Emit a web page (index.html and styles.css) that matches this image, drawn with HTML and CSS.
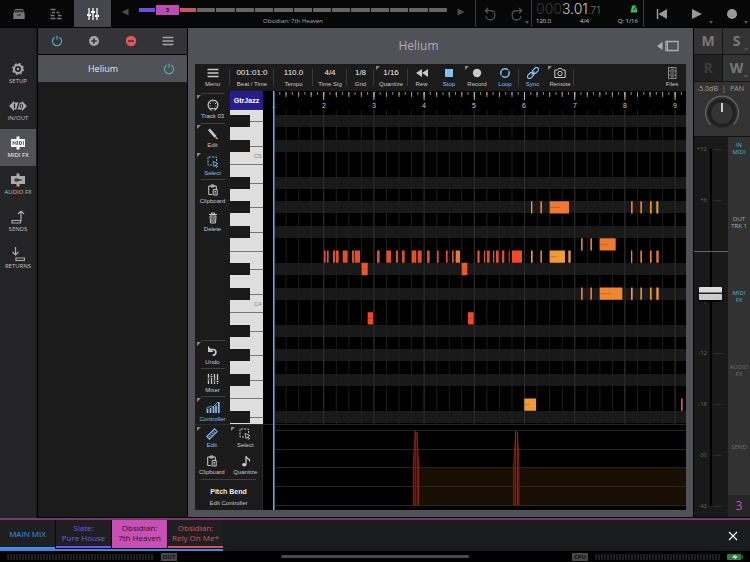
FILE: index.html
```html
<!DOCTYPE html>
<html lang="en">
<head>
<meta charset="utf-8">
<meta name="viewport" content="width=device-width, initial-scale=1">
<title>Helium</title>
<link rel="stylesheet" href="styles.css">
</head>
<body>
<svg class="defs" width="0" height="0" aria-hidden="true">
  <symbol id="power" viewBox="0 0 12 12"><path d="M3.7 2.2a4.6 4.6 0 1 0 4.6 0M6 .8v4" fill="none" stroke="currentColor" stroke-width="1.1"/></symbol>
  <symbol id="bars" viewBox="0 0 12 12"><path d="M.5 2.5h11M.5 6h11M.5 9.500h11" stroke="currentColor" stroke-width="1.300"/></symbol>
  <symbol id="clipboard" viewBox="0 0 12 12"><g fill="none" stroke="currentColor"><path d="M5 10.500H1.700v-8.500H9.300V5M4 3V1h3v2z"/><path d="M6.200 5.500h4v5.500h-4zM7.500 7.500h1.500M7.500 9h1.500"/></g></symbol>
  <symbol id="marquee" viewBox="0 0 12 12"><path d="M9.500 5V1H1v8h4" fill="none" stroke="currentColor" stroke-dasharray="2 1.200"/><path d="M6 5.500l5 2-2 .8 1.500 2.500-1 .5L8.200 9 7 10.500z" fill="none" stroke="currentColor" stroke-width=".8"/></symbol>
  <symbol id="sliders" viewBox="0 0 12 12"><path d="M2 0v12M6 0v12M10 0v12" stroke="currentColor" stroke-width="1.300"/><path d="M0 7h4M4 4h4M8 8h4" stroke="currentColor" stroke-width="2"/></symbol>
</svg>

<header class="topbar">
  <nav class="views">
    <button class="view" aria-label="Library"><svg class="i12" viewBox="0 0 12 12"><path d="M1 5l1.500-3.500h7L11 5z" fill="none" stroke="currentColor"/><path d="M3 3h6M2.500 4.300h7" stroke="currentColor" stroke-width=".7"/><path d="M.3 5h11.400v6H.3z" fill="currentColor"/><path d="M4 7h4" stroke="#222"/></svg></button>
    <button class="view" aria-label="Sequencer"><svg class="i12" viewBox="0 0 12 12"><path d="M.5 1.500h5M2 4.500h3M6.500 4.500h3M.5 7.500h4M8 7.500h3.500M.5 10.500h5M7 10.500h4.500" stroke="currentColor" stroke-width="1.500"/></svg></button>
    <button class="view active" aria-label="Mixer"><svg class="i12" viewBox="0 0 12 12"><use href="#sliders"/></svg></button>
  </nav>
  <div class="selector">
    <button class="arrow" aria-label="Previous track"><svg class="i8" viewBox="0 0 8 8"><path d="M7.500.5v7L.5 4z" fill="currentColor"/></svg></button>
    <div class="overview">
      <div class="segments">
        <i class="seg violet"></i><b class="seg current">3</b><i class="seg red"></i>
        <i class="seg"></i><i class="seg"></i><i class="seg"></i><i class="seg"></i><i class="seg"></i><i class="seg"></i><i class="seg"></i><i class="seg"></i><i class="seg"></i><i class="seg"></i><i class="seg"></i><i class="seg"></i><i class="seg"></i>
      </div>
      <span class="track-name">Obsidian: 7th Heaven</span>
    </div>
    <button class="arrow" aria-label="Next track"><svg class="i8" viewBox="0 0 8 8"><path d="M.5.5v7L7.500 4z" fill="currentColor"/></svg></button>
  </div>
  <div class="history">
    <button aria-label="Undo"><svg class="i14" viewBox="0 0 14 14"><path d="M2.500 3.700H8a4.600 4.600 0 1 1-5.200 5.500M5 1L2.300 3.700 5 6.200" fill="none" stroke="currentColor" stroke-width="1.200"/></svg></button>
    <button class="more" aria-label="Redo"><svg class="i14" viewBox="0 0 14 14"><path d="M11.500 3.700H6a4.600 4.600 0 1 0 5.200 5.500M9 1l2.700 2.700L9 6.200" fill="none" stroke="currentColor" stroke-width="1.200"/></svg></button>
  </div>
  <div class="clock">
    <div class="clock-main"><span class="time"><span class="dim">000</span>3.01<small>.71</small></span>
      <svg class="i8" viewBox="0 0 8 8"><path d="M2 .5h4l1.500 7h-7z" fill="#35bd66"/><path d="M3.500 5L7.500 0" stroke="#0a2513"/></svg></div>
    <div class="clock-sub"><span>120.0</span><span>4/4</span><span>Q: 1/16</span></div>
  </div>
  <div class="transport">
    <button aria-label="Return to start"><svg class="i12" viewBox="0 0 12 12"><path d="M1.500 1v10" stroke="currentColor" stroke-width="1.500"/><path d="M11 1v10L2.500 6z" fill="currentColor"/></svg></button>
    <button class="more" aria-label="Play"><svg class="i12" viewBox="0 0 12 12"><path d="M1 1l10 5-10 5z" fill="currentColor"/></svg></button>
    <button class="more" aria-label="Record"><svg class="i12" viewBox="0 0 12 12"><circle cx="6" cy="6" r="5" fill="currentColor"/></svg></button>
  </div>
</header>

<main class="workspace">
  <nav class="sections">
    <button><svg class="i14" viewBox="0 0 14 14"><circle cx="7" cy="7" r="4" fill="none" stroke="currentColor" stroke-width="2"/><circle cx="7" cy="7" r="5.400" fill="none" stroke="currentColor" stroke-width="1.200" stroke-dasharray="2.200 2.040"/><circle cx="7" cy="7" r="1.200" fill="currentColor"/></svg>SETUP</button>
    <button><svg class="wide" viewBox="0 0 18 14"><path d="M0 7l5-5v1.500h8V2l5 5-5 5v-1.500H5V12z" fill="currentColor"/><path d="M5.500 4.700v4.600M10.300 3L7.700 11" stroke="#242427" stroke-width="1.200"/><ellipse cx="12.300" cy="7" rx="1.400" ry="1.900" fill="none" stroke="#242427"/></svg>IN/OUT</button>
    <button class="active"><svg class="i14" viewBox="0 0 14 14"><path d="M0 3h5.500V.5h3V3H14v8H8.500v2.500h-3V11H0z" fill="currentColor"/><path d="M2 9V5.500l1.500 2 1.500-2V9M6.700 5v4M8.500 5.500V8.500H10q1-1.500 0-3zM12.300 5v4" fill="none" stroke="#45454c" stroke-width=".9"/></svg>MIDI FX</button>
    <button><svg class="i14" viewBox="0 0 14 14"><path d="M0 3h5.500V.5h3V3H14v8H8.500v2.500h-3V11H0z" fill="currentColor"/><path d="M3 7h8M5 5v4M6.500 5.500v3M8 6v2" stroke="#242427"/></svg>AUDIO FX</button>
    <button><svg class="i14" viewBox="0 0 14 14"><path d="M1 10.500h8.500V13H1zM10 11V1M7 4l3-3 3 3" fill="none" stroke="currentColor" stroke-width="1.200"/></svg>SENDS</button>
    <button><svg class="i14" viewBox="0 0 14 14"><path d="M5 11h8.500v2.500H5zM4.500 0v8M1.500 5l3 3 3-3" fill="none" stroke="currentColor" stroke-width="1.200"/></svg>RETURNS</button>
  </nav>

  <section class="chain">
    <div class="chain-tools">
      <button class="cyan" aria-label="Power"><svg class="i12" viewBox="0 0 12 12"><use href="#power"/></svg></button>
      <button aria-label="Add"><svg class="i12" viewBox="0 0 12 12"><circle cx="6" cy="6" r="5" fill="currentColor"/><path d="M6 3.300v5.400M3.300 6h5.400" stroke="#343438" stroke-width="1.500"/></svg></button>
      <button class="remove" aria-label="Remove"><svg class="i12" viewBox="0 0 12 12"><circle cx="6" cy="6" r="5.200" fill="currentColor"/><path d="M3 6h6" stroke="#343438" stroke-width="1.500"/></svg></button>
      <button aria-label="List"><svg class="i12" viewBox="0 0 12 12"><use href="#bars"/></svg></button>
    </div>
    <div class="chain-item"><span class="chain-name">Helium</span><button class="cyan" aria-label="Helium power"><svg class="i12" viewBox="0 0 12 12"><use href="#power"/></svg></button></div>
  </section>

  <section class="plugin">
    <div class="plugin-title"><span></span><h1>Helium</h1>
      <button aria-label="Expand"><svg class="expand" viewBox="0 0 22 12"><path d="M0 6l5.500-4v8z" fill="currentColor"/><path d="M9 1.500h12v9H9z" fill="none" stroke="currentColor" stroke-width="1.300"/><path d="M10.500 1v10" stroke="currentColor"/></svg></button></div>
    <div class="daw">
      <div class="daw-bar">
        <button class="w35 sep"><svg class="i12" viewBox="0 0 12 12"><use href="#bars"/></svg>Menu</button>
        <button class="w44 sep"><b>001:01:0</b>Beat / Time</button>
        <button class="w39 sep"><b>110.0</b>Tempo</button>
        <button class="w34 sep"><b>4/4</b>Time Sig</button>
        <button class="w27 sep"><b>1/8</b>Grid</button>
        <button class="w34 sep corner"><b>1/16</b>Quantize</button>
        <button class="w27"><svg class="i12" viewBox="0 0 12 12"><path d="M6 2v8L0 6zM12 2v8L6 6z" fill="currentColor"/></svg>Rew</button>
        <button class="w28 on"><svg class="i12" viewBox="0 0 12 12"><path d="M2 2h8v8H2z" fill="currentColor"/></svg>Stop</button>
        <button class="w28 corner"><svg class="i12" viewBox="0 0 12 12"><circle cx="6" cy="6" r="4.200" fill="currentColor"/></svg>Record</button>
        <button class="w28 on sep"><svg class="i12" viewBox="0 0 12 12"><circle cx="6" cy="6" r="4.200" fill="none" stroke="currentColor" stroke-width="1.500"/><path d="M9.500 1.500v2.700H7M2.500 10.500V7.800H5" fill="none" stroke="#1b1b1b" stroke-width=".8"/></svg>Loop</button>
        <button class="w27 on"><svg class="i12" viewBox="0 0 12 12"><g fill="none" stroke="currentColor" stroke-width="1.200"><rect x="5" y="1.500" width="7" height="4" rx="2" transform="rotate(-45 8.500 3.500)"/><rect x="0" y="6.500" width="7" height="4" rx="2" transform="rotate(-45 3.500 8.500)"/><path d="M4.500 7.500l3-3"/></g></svg>Sync</button>
        <button class="w28 sep corner"><svg class="i12" viewBox="0 0 12 12"><path d="M.8 3h2.700l1-1.500h3l1 1.500h2.700v7.500H.8z" fill="none" stroke="currentColor"/><circle cx="6" cy="6.500" r="2.200" fill="none" stroke="currentColor"/></svg>Remote</button>
        <button class="w28 last"><svg class="i12 grey" viewBox="0 0 12 12"><path d="M2.500.5h7.500v11H2.500zM2.500 4H10M2.500 8H10M4.500 2.200h3.500M4.500 6h3.500M4.500 9.800h3.500" fill="none" stroke="currentColor"/></svg>Files</button>
      </div>
      <div class="daw-body">
        <div class="tools">
          <button class="rule corner"><svg class="i12" viewBox="0 0 12 12"><circle cx="6" cy="6" r="4.900" fill="none" stroke="currentColor" stroke-width="1.200"/><path d="M4 11.500V9.500h4v2" fill="#1b1b1b" stroke="currentColor"/><path d="M3 4.500h1M8 4.500h1M5.500 3h1M2.700 7h1M8.300 7h1" stroke="currentColor"/></svg>Track 03</button>
          <button class="rule corner"><svg class="i12" viewBox="0 0 12 12"><path d="M3 .5l6.500 7.500-2 1.800L1 2.300z" fill="currentColor"/><path d="M9.500 8.800l1.800 2.500L8 10.300z" fill="currentColor"/></svg>Edit</button>
          <button class="on corner"><svg class="i12" viewBox="0 0 12 12"><use href="#marquee"/></svg>Select</button>
          <button class="rule"><svg class="i12" viewBox="0 0 12 12"><use href="#clipboard"/></svg>Clipboard</button>
          <button><svg class="i12" viewBox="0 0 12 12"><path d="M2 2.500h8M4.500 2V1h3v1" fill="none" stroke="currentColor"/><path d="M3 4h6l-.5 7h-5zM5 5v5M7 5v5" fill="none" stroke="currentColor"/></svg>Delete</button>
          <span class="spacer"></span>
          <button class="rule corner"><svg class="i12" viewBox="0 0 12 12"><path d="M3.500 4.500h3a2.700 2.700 0 1 1-.8 5.500" fill="none" stroke="currentColor" stroke-width="1.700"/><path d="M1 1v6h5.500z" fill="currentColor"/></svg>Undo</button>
          <button class="rule"><svg class="i12" viewBox="0 0 12 12"><path d="M1.500 1v10M4.500 1v10M7.500 1v10M10.500 1v10" stroke="currentColor" stroke-width="1.300"/><path d="M0 6h3M3 3.500h3M6 8h3M9 8.500h3" stroke="#1b1b1b" stroke-width="2.500"/><path d="M.5 6h2M3.500 3.500h2M6.500 8h2M9.500 8.500h2" stroke="currentColor"/></svg>Mixer</button>
          <button class="rule on corner"><svg class="i14" viewBox="0 0 14 12"><path d="M1.500 8v4M4.500 7v5M7.500 6v6M10 4.500V12M12.800 1v11" stroke="currentColor" stroke-width="1.700"/><path d="M0 7.500l4-2 3 .5 5-5" fill="none" stroke="currentColor" stroke-width=".8"/></svg>Controller</button>
        </div>
        <div class="keyboard">
          <b>GtrJazz</b>
          <svg class="fill" aria-label="Keys">
            <rect width="100%" height="314" fill="#dedede"/>
            <path d="M19 11.500h14M19 36.500h14M0 54.500h33M19 73.500h14M19 97.500h14M19 122.500h14M0 141.500h33M19 159.500h14M19 184.500h14M0 202.500h33M19 221.500h14M19 245.500h14M19 270.500h14M0 288.500h33M19 307.500h14" stroke="#777"/>
            <path d="M0 5h20v12H0zM0 30h20v12H0zM0 67h20v12H0zM0 91h20v12H0zM0 116h20v12H0zM0 153h20v12H0zM0 178h20v12H0zM0 215h20v12H0zM0 239h20v12H0zM0 264h20v12H0zM0 301h20v12H0z" fill="#1a1a1a"/>
            <text x="24" y="48" class="key">C5</text><text x="24" y="196" class="key">C4</text>
          </svg>
        </div>
        <svg class="roll" aria-label="Piano roll">
          <path d="M11 24h4000v12H11zM11 49h4000v12H11zM11 86h4000v12H11zM11 110h4000v12H11zM11 135h4000v12H11zM11 172h4000v12H11zM11 197h4000v12H11zM11 234h4000v12H11zM11 258h4000v12H11zM11 283h4000v12H11zM11 320h4000v12H11z" fill="#191919"/>
          <path d="M22.600 176H4000" stroke="#1e1e1e" stroke-width="314" stroke-dasharray="1 11.550"/>
          <path d="M60.200 176H4000" stroke="#2e2e2e" stroke-width="314" stroke-dasharray="1 49.200"/>
          <path d="M16.300 2.500H4000" stroke="#888" stroke-width="3" stroke-dasharray="1 5.275"/>
          <path d="M22.600 3.500H4000" stroke="#999" stroke-width="5" stroke-dasharray="1 11.550"/>
          <path d="M60.200 5H4000" stroke="#bbb" stroke-width="8" stroke-dasharray="1 49.200"/>
          <g class="bar-number"><text x="11" y="17">1</text><text x="61" y="17">2</text><text x="111" y="17">3</text><text x="161" y="17">4</text><text x="211" y="17">5</text><text x="261" y="17">6</text><text x="312" y="17">7</text><text x="362" y="17">8</text><text x="412" y="17">9</text></g>
          <!-- Notes, drawn at a third of a pixel per unit -->
          <g transform="translate(7 99) scale(.33333)" stroke-width="37" fill="none">
            <path stroke="#e0502c" d="M162 200h5M171 200h5M189 200h6M198 200h8M218 200h15M246 200h7M255 200h15M321 200h8M349 200h14M378 200h6M396 200h8M425 200h14M443 200h12M471 200h8M501 200h5M528 200h5M546 200h5M622 200h7M642 200h4M651 200h8M669 200h4M678 200h8M696 200h7M716 200h3"/>
            <path stroke="#f04a28" d="M726 200h30M293 385h16M594 385h17"/>
            <path stroke="#ea5a2e" d="M275 237h18M575 237h17M1233 644h5"/>
            <path stroke="#ee7a32" d="M557 200h13M811 52h5M839 52h58M811 200h5M933 163h5M961 163h5M989 163h48M933 311h5M961 311h5M1111 52h5M1111 200h5M1140 200h5M1159 200h7M1083 52h5"/>
            <path stroke="#f08630" d="M989 311h68M1111 311h5M1083 200h4"/>
            <path stroke="#f29a38" d="M783 52h4M783 200h5M839 200h46M895 200h7M763 644h35M1083 311h5M1140 311h5M1159 311h7M1140 52h5M1159 52h6"/>
            <path stroke="#000" stroke-opacity=".3" stroke-width="2" d="M841 52h28M841 200h19M991 163h25M991 311h32M764 644h14M277 237h12M577 237h12M295 385h12M596 385h12"/>
          </g>
        </svg>
        <div class="controller">
          <button class="on corner"><svg class="i12" viewBox="0 0 12 12"><path d="M8.500.8l2.700 2.700-7.700 7.700L.8 8.500zM3 8l1 1M4.500 6.500l1 1M6 5l1 1M7.500 3.500l1 1" fill="none" stroke="currentColor" stroke-width="1.100"/></svg>Edit</button>
          <button class="corner"><svg class="i12" viewBox="0 0 12 12"><use href="#marquee"/></svg>Select</button>
          <button><svg class="i12" viewBox="0 0 12 12"><use href="#clipboard"/></svg>Clipboard</button>
          <button><svg class="i12" viewBox="0 0 12 12"><path d="M7 9.500V1q0 2 3.500 3.500v2" fill="none" stroke="currentColor" stroke-width="1.200"/><ellipse cx="5.200" cy="9.700" rx="2.200" ry="1.700" fill="currentColor"/></svg>Quantize</button>
          <button class="lane-name"><b>Pitch Bend</b>Edit Controller</button>
        </div>
        <svg class="lane" aria-label="Pitch bend lane">
          <rect x="155" y="43" width="100%" height="38" fill="#180e01"/>
          <path d="M11 6.500h4000M11 25.500h4000M11 43.500h4000M11 62.500h4000M11 81.500h4000" stroke="#242424"/>
          <path d="M0 .5h4000" stroke="#242424"/>
          <g fill="#4a0d06" stroke="#a02a18" stroke-width=".8"><path d="M150.300 81V41l2-34v74zM154 81V8l1.500 30v43z"/><path d="M250.700 81V41l2-34v74zM254.400 81V8l1.500 30v43z"/></g>
        </svg>
        <div class="playhead"></div>
      </div>
    </div>
  </section>

  <aside class="strip">
    <div class="switches">
      <button>M</button><button class="more">S</button><button class="off">R</button><button class="more">W</button>
    </div>
    <div class="pan">
      <div class="pan-label"><span>-5.0dB</span><span>|</span><span>PAN</span></div>
      <button aria-label="Pan"><svg class="knob" viewBox="0 0 40 40"><path d="M8.500 31.500a16.500 16.500 0 1 1 23 0" fill="none" stroke="#666" stroke-width="1.200"/><circle cx="20" cy="20" r="14.500" fill="#222"/><circle cx="20" cy="20" r="11.500" fill="#343434" stroke="#1a1a1a"/><path d="M20 10v9" stroke="#ccc" stroke-width="2"/></svg></button>
    </div>
    <div class="levels">
      <div class="fader">
        <ol class="scale"><li>+12</li><li>+6</li><li class="zero"></li><li>-6</li><li>-12</li><li>-18</li><li>-30</li><li>-42</li></ol>
        <input type="range" min="0" max="1000" value="594" aria-label="Level">
      </div>
      <div class="routes">
        <button class="cyan">IN<br>MIDI</button><button class="lit">OUT<br>TRK 1</button><button class="cyan">MIDI<br>FX</button><button>AUDIO<br>FX</button><button class="send">SEND</button>
        <b>3</b>
      </div>
    </div>
  </aside>
</main>

<nav class="tabs">
  <div class="tab-list">
    <button class="tab main">MAIN MIX</button><button class="tab slate">Slate:<br>Pure House</button><button class="tab heaven">Obsidian:<br>7th Heaven</button><button class="tab rely">Obsidian:<br>Rely On Me*</button>
  </div>
  <button class="close" aria-label="Close"><svg class="i10" viewBox="0 0 10 10"><path d="M1 1l8 8M9 1L1 9" stroke="currentColor" stroke-width="1.200"/></svg></button>
</nav>
<footer class="status">
  <div class="group"><span class="meter long"></span><span class="badge">OUT</span></div>
  <span class="home"></span>
  <div class="group end"><span class="badge">CPU</span><span class="meter"></span><svg class="battery" viewBox="0 0 16 6"><rect width="14.500" height="6" rx="1" fill="#2e7d3c"/><path d="M15 1.500h1v3h-1z" fill="#2e7d3c"/><path d="M5 3.500L8.500.5 8 2.500h3L7.500 5.500 8 3.500z" fill="#fff"/></svg></div>
</footer>
</body>
</html>
```
FILE: styles.css
```css
* { box-sizing: border-box; }
body {
  margin: 0;
  min-height: 100vh;
  display: grid;
  grid-template-rows: 28px 1fr 33px 11px;
  background: #000;
  color: #c0c0c2;
  font: 6px/8px "Open Sans", "Noto Sans", sans-serif;
}
button { margin: 0; padding: 0; border: 0; background: none; color: inherit; font: inherit; }
svg { display: block; flex: none; }
.defs { position: absolute; }
.i8 { width: 8px; height: 8px; }
.i10 { width: 10px; height: 10px; }
.i12 { width: 12px; height: 12px; }
.i14 { width: 14px; height: 14px; }
.wide { width: 18px; height: 14px; }
.cyan { color: #4bb5c0; }
.grey { color: #8a8a8a; }

/* Small triangle marking a button that opens a menu */
.more { position: relative; }
.more::after {
  content: "";
  position: absolute;
  right: 2px;
  bottom: 3px;
  border: 2px solid transparent;
  border-top: 3px solid #555;
  border-bottom: 0;
}

/* Top bar */
.topbar { display: flex; background: #070707; border-bottom: 1px solid #000; }
.topbar button { display: grid; place-items: center; }
.views { display: flex; color: #77777a; }
.view { width: 37px; }
.view.active { background: #45454c; color: #fff; }
.selector { flex: 1; display: flex; align-items: start; border-right: 1px solid #3a3a3a; }
.arrow { width: 28px; height: 23px; color: #4c4c4c; }
.overview { flex: 1; display: flex; flex-direction: column; align-items: center; padding-top: 4px; }
.segments { width: 100%; height: 11px; display: flex; align-items: center; gap: 1px; }
.seg { flex: 18; height: 4px; background: #666; }
.seg.violet { flex: 16; background: #6a50dd; }
.seg.red { flex: 16; background: #cf5457; }
.seg.current { flex: 22; height: 10px; background: #bd4cb0; color: #1d0a1b; text-align: center; line-height: 10px; }
.track-name { margin-top: 2px; color: #a8a8aa; }
.history { width: 56px; display: flex; color: #555; border-right: 1px solid #3a3a3a; }
.history button { flex: 1; }
.clock { width: 112px; padding: 1px 5px 0 4px; border-right: 1px solid #3a3a3a; }
.clock-main { display: flex; align-items: center; justify-content: space-between; height: 16px; }
.time { font: 300 14px/16px Inter, sans-serif; color: #c8c8c8; }
.time small { font-size: 10px; color: #777; }
.dim { color: #3c3c3c; }
.clock-sub { display: flex; justify-content: space-between; color: #ccc; }
.transport { width: 106px; display: flex; color: #999; }
.transport button { flex: 1; }

/* Workspace */
.workspace { display: grid; grid-template-columns: 37px 151px 1fr 57px; min-width: 0; }
.sections { background: #242427; padding-top: 27px; border-right: 1px solid #1a1a1c; }
.sections button {
  width: 100%;
  height: 37px;
  display: flex;
  flex-direction: column;
  align-items: center;
  justify-content: center;
  gap: 1px;
}
.sections svg { color: #aaaaac; }
.sections .active { background: #515158; color: #fff; }
.sections .active svg { color: #fff; }
.chain { background: #1b1b1b; border: 1px solid #000; border-top: 0; }
.chain-tools { height: 27px; display: grid; grid-template-columns: repeat(4, 1fr); background: #343438; border-bottom: 1px solid #000; color: #a5a5a8; }
.chain-tools button, .chain-item button { display: grid; place-items: center; }
.chain .remove { color: #e0585c; }
.chain-item { height: 27px; display: grid; grid-template-columns: 1fr 37px; align-items: center; text-align: center; background: #515158; color: #e4e4e6; font-size: 9px; }
.chain-name { padding-left: 18px; }

/* Plugin window */
.plugin { display: flex; flex-direction: column; min-width: 0; background: #515158; padding: 0 7px 7px; border-bottom: 1px solid #000; }
.plugin-title { height: 36px; display: grid; grid-template-columns: 1fr auto 1fr; align-items: center; color: #aeaeb2; }
.plugin-title h1 { margin: 0; padding-right: 44px; font-size: 12px; line-height: 16px; font-weight: 400; }
.plugin-title button { justify-self: end; margin-right: 7px; }
.expand { width: 22px; height: 12px; }
.daw { flex: 1; display: flex; flex-direction: column; background: #000; color: #c9c9c9; font-family: "Liberation Sans", Arial, sans-serif; }
.daw button { position: relative; display: flex; flex-direction: column; align-items: center; justify-content: center; gap: 1px; white-space: nowrap; }
.daw button b { font-size: 8px; line-height: 12px; font-weight: 400; color: #eee; }
.daw .on { color: #82c0f2; }
.corner::before { content: ""; position: absolute; left: 2px; top: 2px; border-top: 4px solid #888; border-right: 4px solid transparent; }
.daw-bar { height: 27px; display: flex; background: #1b1b1b; }
.sep::after { content: ""; position: absolute; right: 0; top: 5px; height: 17px; border-right: 1px solid #3a3a3a; }
.w27 { width: 27px; }
.w28 { width: 28px; }
.w34 { width: 34px; }
.w35 { width: 35px; }
.w39 { width: 39px; }
.w44 { width: 44px; }
.last { margin-left: auto; }
.daw-body { position: relative; flex: 1; display: grid; grid-template-columns: 35px 33px 1fr; grid-template-rows: 1fr 86px; }
.tools { display: flex; flex-direction: column; background: #1b1b1b; padding-top: 2px; }
.tools button { height: 28px; padding-top: 2px; }
.tools button:first-child { height: 30px; }
.rule::after { content: ""; position: absolute; left: 6px; right: 5px; top: 0; border-top: 1px solid #404040; }
.spacer { flex: 1; }
.keyboard { display: flex; flex-direction: column; }
.keyboard b { height: 19px; background: #2b1c8c; color: #fff; text-align: center; font-size: 7px; line-height: 19px; }
.fill { flex: 1; width: 100%; min-height: 0; }
.key { font-size: 6px; fill: #888; }
.roll, .lane { width: 100%; height: 100%; }
.bar-number { font-size: 7px; text-anchor: middle; fill: #ccc; }
.controller { grid-column: span 2; display: grid; grid-template-columns: 1fr 1fr; grid-template-rows: 27px 27px 1fr; background: #1b1b1b; border-right: 1px solid #2c2c2c; border-top: 1px solid #2c2c2c; }
.controller .lane-name { grid-column: span 2; margin: 0 6px; padding-top: 2px; border-top: 1px solid #404040; }
.controller .lane-name b { font-size: 7px; font-weight: 700; }
.playhead { position: absolute; left: 78px; top: 0; bottom: 0; border-left: 1px solid #79a8cc; border-right: 1px solid #3c6484; }

/* Channel strip */
.strip { display: flex; flex-direction: column; border-left: 1px solid #000; background: #191919; border-bottom: 1px solid #000; }
.switches { display: grid; grid-template-columns: 28px 1fr; grid-auto-rows: 26px; gap: 1px; background: #141414; padding-bottom: 1px; }
.switches button { background: #333; color: #777; font-size: 14px; font-weight: 700; }
.switches .off { background: #222; color: #3c3c3c; }
.pan { height: 54px; background: #333; text-align: center; padding-top: 3px; }
.pan-label { display: flex; justify-content: space-between; padding: 0 6px 0 3px; color: #a0a0a0; font-size: 7px; }
.pan button { display: block; margin: 0 auto; }
.knob { width: 40px; height: 40px; }
.levels { flex: 1; display: grid; grid-template-columns: 34px 1fr; border-top: 1px solid #111; }
.fader { position: relative; background: linear-gradient(to right, transparent 16px, #000 16px, #000 18px, transparent 18px) no-repeat 0 12px / 100% 357px; }
.scale { list-style: none; margin: 0; padding: 7px 0 0; display: flex; flex-direction: column; gap: 41px; color: #666; }
.scale li { height: 10px; display: grid; grid-template-columns: 13px 9px; column-gap: 6px; align-items: center; text-align: right; }
.scale li::after { content: ""; border-top: 1px solid #2c2c2c; }
.scale .zero { display: block; }
.scale .zero::after { display: block; border-top: 1px solid #666; margin-top: 5px; }
.fader input {
  position: absolute;
  left: 5px;
  top: 5px;
  width: 23px;
  height: 370px;
  margin: 0;
  appearance: none;
  background: none;
  writing-mode: vertical-lr;
  direction: rtl;
}
.fader input::-webkit-slider-thumb {
  appearance: none;
  width: 23px;
  height: 13px;
  border-radius: 1px;
  background: linear-gradient(#ddd 0 5px, #222 6px 7px, #ccc 7px);
  box-shadow: 0 2px 3px #000;
}
.routes { display: grid; grid-template-rows: repeat(4, 74px) 1fr 22px; background: #323232; color: #707070; text-align: center; }
.routes button { font-size: 6px; line-height: 7px; padding-bottom: 50px; }
.routes .send { padding-bottom: 34px; }
.routes .lit { color: #aaa; }
.routes b { background: #262626; color: #c24fb5; font-size: 12px; line-height: 22px; font-weight: 400; }

/* Track tabs */
.tabs { display: flex; justify-content: space-between; background: #1a1b1d; border-top: 2px solid #803474; }
.tab-list { display: flex; gap: 1px; border-bottom: 2px solid #4388dc; background: #08080a; }
.tab { width: 55px; font-size: 8px; line-height: 10px; background: #1f1f22; border-bottom: 2px solid; margin-bottom: 1px; }
.tab.main { color: #4390e6; margin-bottom: 0; }
.tab.slate { color: #7258e4; }
.tab.heaven { background: #c850b5; color: #26101f; border-color: #c850b5; }
.tab.rely { color: #d65357; }
.close { width: 34px; display: grid; place-items: center; color: #fff; }

/* Status bar */
.status { display: grid; grid-template-columns: 1fr 188px 1fr; align-items: center; padding: 0 7px; }
.group { display: flex; align-items: center; gap: 7px; }
.group.end { justify-content: flex-end; }
.meter { width: 125px; height: 6px; background: repeating-linear-gradient(to right, #1e1e1e 0 2px, #080808 2px 3px); }
.meter.long { width: 147px; }
.badge { width: 16px; height: 8px; background: #484848; color: #101010; font-size: 6px; line-height: 8px; font-weight: 700; text-align: center; }
.home { height: 3px; border-radius: 2px; background: #4a4a4a; }
.battery { width: 16px; height: 6px; }
```
